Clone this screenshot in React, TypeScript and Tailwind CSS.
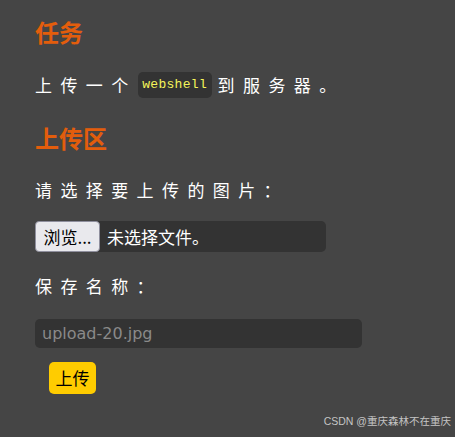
export default function App() {
  const cjk = { fontFamily: '"Noto Sans CJK SC", "Noto Sans", sans-serif' };
  return (
    <div className="relative min-h-[437px] w-full bg-[#454545] pl-[35px] text-white" style={cjk}>
      <div className="flex flex-col items-start">
        <h2 className="mt-[17px] h-[30px] text-[24px] font-bold leading-[30px] text-[#e35d0c]">任务</h2>
        <div className="mt-[25px] flex h-[26px] items-center text-[17px] tracking-[8.4px]">
          <span>上传一个</span>
          <code
            className="ml-[1px] mr-[6px] flex h-[26px] w-[74px] items-center justify-center rounded-[5px] bg-[#333333] text-[13px] font-normal tracking-[0.3px] text-[#f5f55a]"
            style={{ fontFamily: '"Liberation Mono", monospace', fontSize: '13px' }}
          >
            webshell
          </code>
          <span>到服务器。</span>
        </div>
        <h2 className="mt-[25px] h-[30px] text-[24px] font-bold leading-[30px] text-[#e35d0c]">上传区</h2>
        <div className="mt-[25px] flex h-[24px] items-center text-[17px] tracking-[8.4px]">请选择要上传的图片：</div>
        <div className="mt-[19px] flex h-[31px] w-[291px] items-center rounded-[5px] bg-[#333333]">
          <span className="flex h-[31px] w-[65px] items-center justify-center rounded-[4px] border border-[#8f8f9d] bg-[#e9e9ed] text-[17px] text-black">
            浏览...
          </span>
          <span className="ml-[7px] text-[17px]">未选择文件。</span>
        </div>
        <div className="mt-[22px] flex h-[24px] items-center text-[17px] tracking-[8.4px]">保存名称：</div>
        <div className="mt-[21px] flex h-[29px] w-[327px] items-center rounded-[5px] bg-[#333333] px-[7px]">
          <span className="text-[16px] text-[#8a8a8a]" style={{ fontFamily: '"DejaVu Sans", "Noto Sans", sans-serif' }}>
            upload-20.jpg
          </span>
        </div>
        <button className="ml-[14px] mt-[14px] flex h-[32px] w-[47px] items-center justify-center rounded-[5px] bg-[#ffcc00] text-[17px] text-black">
          上传
        </button>
      </div>
      <div
        className="absolute bottom-[7px] right-[4px] text-[10.5px] text-[#c4c4c4]"
        style={{ fontFamily: '"Liberation Sans", "Noto Sans CJK SC", sans-serif' }}
      >
        CSDN @重庆森林不在重庆
      </div>
    </div>
  );
}
